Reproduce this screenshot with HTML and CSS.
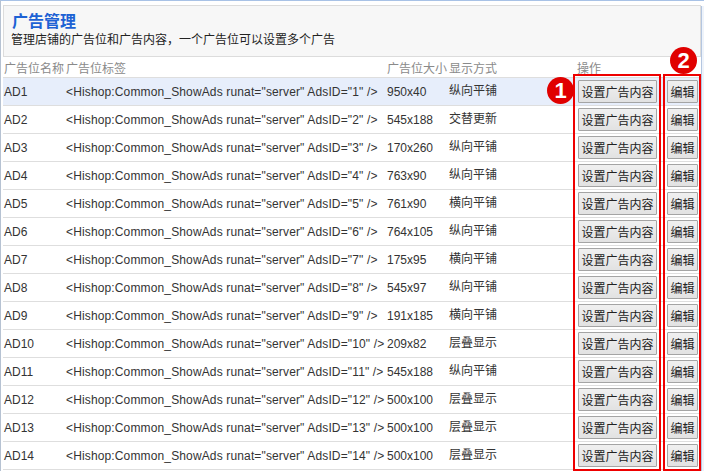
FILE: index.html
```html
<!DOCTYPE html>
<html lang="zh-CN">
<head>
    <meta charset="UTF-8">
    <title>广告管理</title>
    <link rel="stylesheet" href="styles.css">
</head>
<body>

<div class="page">
    <div class="main">
        <div class="title-box">
            <h1>广告管理</h1>
            <p>管理店铺的广告位和广告内容，一个广告位可以设置多个广告</p>
        </div>

        <table class="ad-table">
            <colgroup>
                <col class="c-name"><col class="c-tag"><col class="c-size"><col class="c-mode"><col class="c-op"><col class="c-edit">
            </colgroup>
            <thead>
                <tr>
                    <th>广告位名称</th>
                    <th>广告位标签</th>
                    <th>广告位大小</th>
                    <th>显示方式</th>
                    <th>操作</th>
                    <th></th>
                </tr>
            </thead>
            <tbody>
                <tr class="active"><td>AD1</td><td>&lt;Hishop:Common_ShowAds runat="server" AdsID="1" /&gt;</td><td>950x40</td><td class="cn">纵向平铺</td><td><button class="btn btn-set">设置广告内容</button></td><td><button class="btn btn-edit">编辑</button></td></tr>
                <tr><td>AD2</td><td>&lt;Hishop:Common_ShowAds runat="server" AdsID="2" /&gt;</td><td>545x188</td><td class="cn">交替更新</td><td><button class="btn btn-set">设置广告内容</button></td><td><button class="btn btn-edit">编辑</button></td></tr>
                <tr><td>AD3</td><td>&lt;Hishop:Common_ShowAds runat="server" AdsID="3" /&gt;</td><td>170x260</td><td class="cn">纵向平铺</td><td><button class="btn btn-set">设置广告内容</button></td><td><button class="btn btn-edit">编辑</button></td></tr>
                <tr><td>AD4</td><td>&lt;Hishop:Common_ShowAds runat="server" AdsID="4" /&gt;</td><td>763x90</td><td class="cn">纵向平铺</td><td><button class="btn btn-set">设置广告内容</button></td><td><button class="btn btn-edit">编辑</button></td></tr>
                <tr><td>AD5</td><td>&lt;Hishop:Common_ShowAds runat="server" AdsID="5" /&gt;</td><td>761x90</td><td class="cn">横向平铺</td><td><button class="btn btn-set">设置广告内容</button></td><td><button class="btn btn-edit">编辑</button></td></tr>
                <tr><td>AD6</td><td>&lt;Hishop:Common_ShowAds runat="server" AdsID="6" /&gt;</td><td>764x105</td><td class="cn">纵向平铺</td><td><button class="btn btn-set">设置广告内容</button></td><td><button class="btn btn-edit">编辑</button></td></tr>
                <tr><td>AD7</td><td>&lt;Hishop:Common_ShowAds runat="server" AdsID="7" /&gt;</td><td>175x95</td><td class="cn">横向平铺</td><td><button class="btn btn-set">设置广告内容</button></td><td><button class="btn btn-edit">编辑</button></td></tr>
                <tr><td>AD8</td><td>&lt;Hishop:Common_ShowAds runat="server" AdsID="8" /&gt;</td><td>545x97</td><td class="cn">纵向平铺</td><td><button class="btn btn-set">设置广告内容</button></td><td><button class="btn btn-edit">编辑</button></td></tr>
                <tr><td>AD9</td><td>&lt;Hishop:Common_ShowAds runat="server" AdsID="9" /&gt;</td><td>191x185</td><td class="cn">横向平铺</td><td><button class="btn btn-set">设置广告内容</button></td><td><button class="btn btn-edit">编辑</button></td></tr>
                <tr><td>AD10</td><td>&lt;Hishop:Common_ShowAds runat="server" AdsID="10" /&gt;</td><td>209x82</td><td class="cn">层叠显示</td><td><button class="btn btn-set">设置广告内容</button></td><td><button class="btn btn-edit">编辑</button></td></tr>
                <tr><td>AD11</td><td>&lt;Hishop:Common_ShowAds runat="server" AdsID="11" /&gt;</td><td>545x188</td><td class="cn">纵向平铺</td><td><button class="btn btn-set">设置广告内容</button></td><td><button class="btn btn-edit">编辑</button></td></tr>
                <tr><td>AD12</td><td>&lt;Hishop:Common_ShowAds runat="server" AdsID="12" /&gt;</td><td>500x100</td><td class="cn">层叠显示</td><td><button class="btn btn-set">设置广告内容</button></td><td><button class="btn btn-edit">编辑</button></td></tr>
                <tr><td>AD13</td><td>&lt;Hishop:Common_ShowAds runat="server" AdsID="13" /&gt;</td><td>500x100</td><td class="cn">层叠显示</td><td><button class="btn btn-set">设置广告内容</button></td><td><button class="btn btn-edit">编辑</button></td></tr>
                <tr><td>AD14</td><td>&lt;Hishop:Common_ShowAds runat="server" AdsID="14" /&gt;</td><td>500x100</td><td class="cn">层叠显示</td><td><button class="btn btn-set">设置广告内容</button></td><td><button class="btn btn-edit">编辑</button></td></tr>
            </tbody>
        </table>
    </div>
    <div class="scrollbar"></div>

    <!-- 标注 -->
    <div class="mark mark-set"></div>
    <div class="mark mark-edit"></div>
    <div class="badge badge-1">1</div>
    <div class="badge badge-2">2</div>
</div>

</body>
</html>
```

FILE: styles.css
```css
/* 全局样式 */
* {
    margin: 0;
    padding: 0;
    box-sizing: border-box;
}

body {
    font-family: "Liberation Sans", Arial, "Noto Sans CJK SC", sans-serif;
    font-size: 12px;
    color: #333;
    background: #fff;
}

.page {
    position: relative;
    display: flex;
    height: 471px;
    overflow: hidden;
    border-top: 1px solid #a8c2e6;
    border-left: 1px solid #b6c2d2;
}

.main {
    flex: 1;
    padding: 4px 0 0 2px;
}

.scrollbar {
    width: 3px;
    margin-top: 5px;
    background: #eef3fa;
    border-left: 1px solid #b4c6e0;
}

/* 标题框 */
.title-box {
    background: #f7f7f7;
    border: 1px solid #dcdcdc;
    height: 52px;
    padding: 6px 8px 0 8px;
}

.title-box h1 {
    font-size: 16px;
    line-height: 20px;
    color: #1d62d4;
    font-weight: bold;
}

.title-box p {
    font-size: 12px;
    line-height: 16px;
    color: #222;
    margin-left: -1px;
}

/* 表格 */
.ad-table {
    width: 698px;
    border-collapse: collapse;
    table-layout: fixed;
}

.c-name { width: 63px; }
.c-tag  { width: 321px; }
.c-size { width: 62px; }
.c-mode { width: 126px; }
.c-op   { width: 89px; }
.c-edit { width: 37px; }

.ad-table th {
    height: 20px;
    font-weight: normal;
    color: #8a8a8a;
    text-align: left;
    white-space: nowrap;
    padding: 2px 0 0 0;
}

.ad-table th:first-child,
.ad-table td:first-child {
    padding-left: 1px;
}

.ad-table td {
    height: 28px;
    border-top: 1px solid #dedede;
    white-space: nowrap;
    overflow: visible;
    vertical-align: middle;
    padding: 1px 0 0 0;
}

.ad-table td:nth-child(2) {
    letter-spacing: 0.14px;
}

.ad-table tbody tr:last-child td {
    border-bottom: 1px solid #dedede;
}

.ad-table tr.active td {
    background: #e7eefb;
}

.ad-table td.cn {
    padding-bottom: 4px;
}

.ad-table th:nth-child(5) { padding-left: 2px; }
.ad-table td:nth-child(5) { padding-left: 3px; }
.ad-table td:nth-child(6) { padding-left: 3px; }

/* 按钮 */
.btn {
    display: block;
    height: 23px;
    font-family: "Noto Sans CJK SC", sans-serif;
    font-size: 12px;
    color: #222;
    background: linear-gradient(#f0f0f0, #e2e2e2);
    border: 1px solid #a4a4a4;
    border-radius: 1px;
    cursor: pointer;
}

.btn-set  { width: 79px; }
.btn-edit { width: 31px; }

/* 标注 */
.mark {
    position: absolute;
    top: 73px;
    height: 397px;
    border: 2px solid #ee0000;
}

.mark-set  { left: 572px; width: 88px; }
.mark-edit { left: 662px; width: 38px; }

.badge {
    position: absolute;
    width: 27px;
    height: 27px;
    border-radius: 50%;
    background: #e00000;
    color: #fff;
    font-family: "Liberation Sans", Arial, sans-serif;
    font-weight: bold;
    font-size: 22px;
    line-height: 27px;
    text-align: center;
}

.badge-1 { left: 546px; top: 76px; }
.badge-2 { left: 669px; top: 46px; }
```
